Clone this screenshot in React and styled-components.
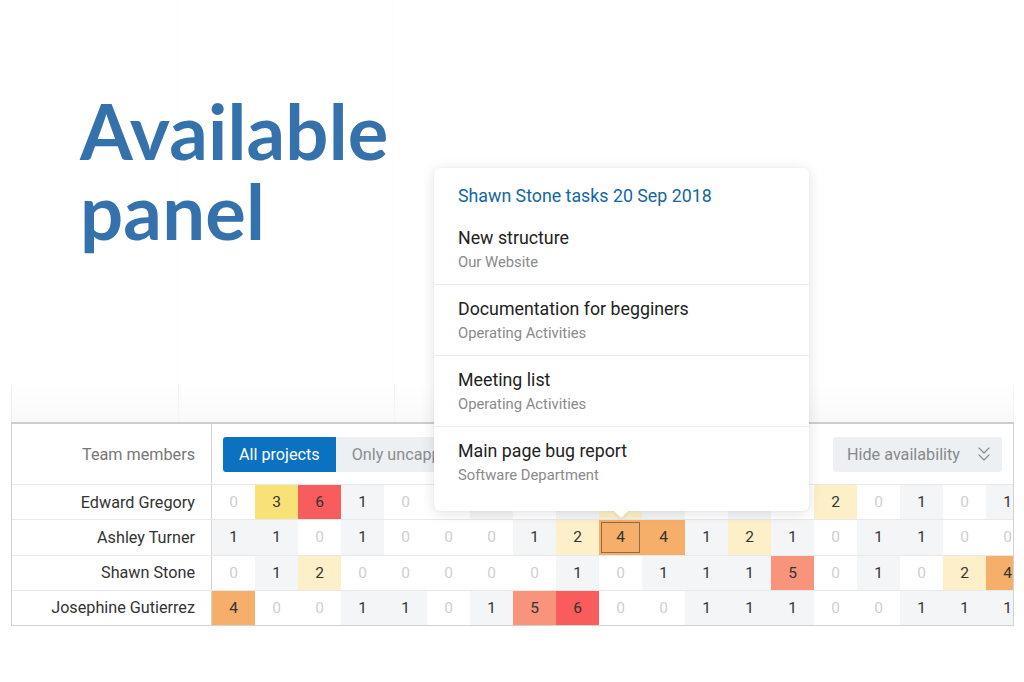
import React from 'react';
import styled, { createGlobalStyle, css } from 'styled-components';
import { ChevronsDown } from 'lucide-react';

const GlobalStyle = createGlobalStyle`
  html, body {
    margin: 0;
    padding: 0;
    background: #ffffff;
  }
  body {
    font-family: Roboto, "Liberation Sans", Arial, sans-serif;
    color: #333;
  }
  * { box-sizing: border-box; }
`;

const CELL_COLORS = {
  0: '#ffffff',
  1: '#f4f5f6',
  2: '#fdf0c9',
  3: '#f8e176',
  4: '#f6ae6b',
  5: '#f8947b',
  6: '#f85c5c',
};

const members = [
  { name: 'Edward Gregory', days: [0, 3, 6, 1, 0, 0, 1, 0, 1, 2, 1, 0, 1, 0, 2, 0, 1, 0, 1] },
  { name: 'Ashley Turner', days: [1, 1, 0, 1, 0, 0, 0, 1, 2, 4, 4, 1, 2, 1, 0, 1, 1, 0, 0], selected: 9 },
  { name: 'Shawn Stone', days: [0, 1, 2, 0, 0, 0, 0, 0, 1, 0, 1, 1, 1, 5, 0, 1, 0, 2, 4] },
  { name: 'Josephine Gutierrez', days: [4, 0, 0, 1, 1, 0, 1, 5, 6, 0, 0, 1, 1, 1, 0, 0, 1, 1, 1] },
];

const tasks = [
  { title: 'New structure', project: 'Our Website' },
  { title: 'Documentation for begginers', project: 'Operating Activities' },
  { title: 'Meeting list', project: 'Operating Activities' },
  { title: 'Main page bug report', project: 'Software Department' },
];

const Page = styled.div`
  position: relative;
  width: 1024px;
  height: 682px;
  overflow: hidden;
  background: #fff;
  display: flex;
  flex-direction: column;
`;

const Hero = styled.div`
  height: 385px;
  padding: 91px 0 0 80px;
  background-image: linear-gradient(90deg, transparent 177px, rgba(0,0,0,0.008) 177px, rgba(0,0,0,0.008) 178px, transparent 178px),
    linear-gradient(90deg, transparent 392px, rgba(0,0,0,0.01) 392px, rgba(0,0,0,0.01) 393px, transparent 393px),
    linear-gradient(90deg, transparent 822px, rgba(0,0,0,0.01) 822px, rgba(0,0,0,0.01) 823px, transparent 823px);
`;

const Title = styled.h1`
  margin: 0;
  font-family: Lato, "Open Sans", "Liberation Sans", sans-serif;
  font-weight: 700;
  font-size: 76px;
  line-height: 80px;
  color: #3571ab;
  letter-spacing: 0.2px;
`;

const Fade = styled.div`
  height: 37px;
  margin: 0 10px 0 11px;
  border-left: 1px solid #efefef;
  border-right: 1px solid #f4f4f4;
  background:
    linear-gradient(90deg, transparent 166px, #f4f4f4 166px, #f4f4f4 167px, transparent 167px),
    linear-gradient(90deg, transparent 382px, #f4f4f4 382px, #f4f4f4 383px, transparent 383px),
    linear-gradient(180deg, rgba(255,255,255,0) 0%, rgba(246,246,246,0.7) 100%);
`;

const Table = styled.div`
  margin: 0 10px 0 11px;
  border: 1.5px solid #d2d2d2;
  border-top: 2px solid #cdcdcd;
  overflow: hidden;
  background: #fff;
`;

const Row = styled.div`
  display: grid;
  grid-template-columns: 200px repeat(19, 43px);
  height: ${p => (p.$header ? '60px' : '35.25px')};
  border-top: ${p => (p.$header ? 'none' : '1px solid #e8e8e8')};
`;

const NameCell = styled.div`
  display: flex;
  align-items: center;
  justify-content: flex-end;
  padding-right: 16px;
  border-right: 1px solid #d4d4d4;
  font-size: 16.2px;
  color: ${p => (p.$muted ? '#777' : '#333')};
  white-space: nowrap;
`;

const Toolbar = styled.div`
  grid-column: 2 / -1;
  width: 800px;
  display: flex;
  align-items: center;
  justify-content: space-between;
  padding: 0 10px 0 11px;
`;

const Segmented = styled.div`
  display: flex;
`;

const SegButton = styled.div`
  height: 35px;
  display: flex;
  align-items: center;
  padding: 0 16px;
  font-size: 16.2px;
  white-space: nowrap;
  ${p => (p.$active
    ? css`
        background: #0a72c1;
        color: #fff;
        border-radius: 3px 0 0 3px;
      `
    : css`
        background: #edf0f3;
        color: #8a8d90;
      `)}
`;

const HideButton = styled.div`
  height: 35px;
  width: 169px;
  display: flex;
  align-items: center;
  justify-content: space-between;
  padding: 0 6px 0 14px;
  background: #edf0f3;
  border-radius: 3px;
  font-size: 16.2px;
  color: #86898c;
`;

const Cell = styled.div`
  display: flex;
  align-items: center;
  justify-content: center;
  font-size: 15.5px;
  background: ${p => CELL_COLORS[p.$value]};
  color: ${p => (p.$value === 0 ? '#cfcfcf' : '#333')};
  ${p => p.$selected && css`
    outline: 1.5px solid #8c6b4e;
    outline-offset: -3px;
  `}
`;

const Popover = styled.div`
  position: absolute;
  left: 434px;
  top: 168px;
  width: 375px;
  height: 343px;
  background: #fff;
  border-radius: 6px;
  box-shadow: 0 2px 14px rgba(0, 0, 0, 0.12), 0 0 2px rgba(0, 0, 0, 0.06);
  z-index: 5;

  &::after {
    content: '';
    position: absolute;
    left: 182px;
    bottom: -5px;
    width: 10px;
    height: 10px;
    background: #fff;
    transform: rotate(45deg);
    box-shadow: 2px 2px 3px rgba(0, 0, 0, 0.06);
  }
`;

const PopTitle = styled.div`
  padding: 16px 24px 6px;
  font-size: 17.8px;
  line-height: 24px;
  color: #14679f;
`;

const Task = styled.div`
  padding: 12px 24px 10px;
  border-bottom: ${p => (p.$last ? 'none' : '1px solid #ececec')};
`;

const TaskTitle = styled.div`
  font-size: 17.8px;
  line-height: 24px;
  color: #222;
`;

const TaskProject = styled.div`
  font-size: 14.8px;
  line-height: 24px;
  color: #8a8a8a;
`;

export default function App() {
  return (
    <Page>
      <GlobalStyle />
      <Hero>
        <Title>
          Available
          <br />
          panel
        </Title>
      </Hero>
      <Fade />
      <Table>
        <Row $header>
          <NameCell $muted>Team members</NameCell>
          <Toolbar>
            <Segmented>
              <SegButton $active>All projects</SegButton>
              <SegButton>Only uncapped projects</SegButton>
            </Segmented>
            <HideButton>
              Hide availability
              <ChevronsDown size={24} strokeWidth={1.2} color="#8a8d90" />
            </HideButton>
          </Toolbar>
        </Row>
        {members.map(m => (
          <Row key={m.name}>
            <NameCell>{m.name}</NameCell>
            {m.days.map((v, i) => (
              <Cell key={i} $value={v} $selected={m.selected === i}>{v}</Cell>
            ))}
          </Row>
        ))}
      </Table>
      <Popover>
        <PopTitle>Shawn Stone tasks 20 Sep 2018</PopTitle>
        {tasks.map((t, i) => (
          <Task key={t.title} $last={i === tasks.length - 1}>
            <TaskTitle>{t.title}</TaskTitle>
            <TaskProject>{t.project}</TaskProject>
          </Task>
        ))}
      </Popover>
    </Page>
  );
}
